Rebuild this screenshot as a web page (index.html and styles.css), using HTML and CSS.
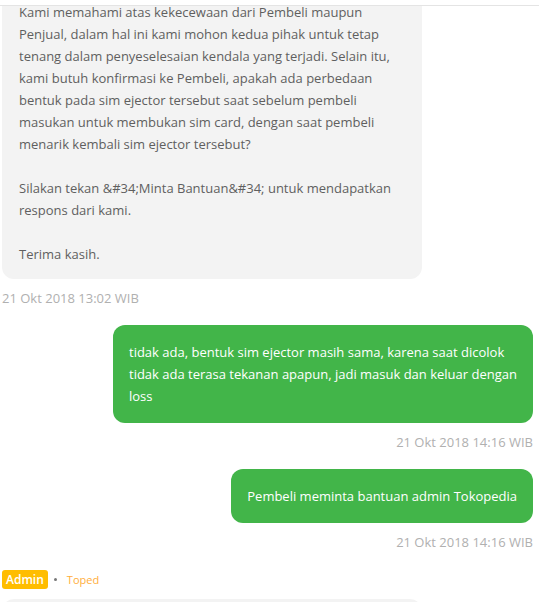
FILE: index.html
```html
<!DOCTYPE html>
<html lang="id">
<head>
<meta charset="UTF-8">
<meta name="viewport" content="width=device-width, initial-scale=1.0">
<title>Diskusi Komplain</title>
<link rel="stylesheet" href="styles.css">
</head>
<body>

<div class="topbar"></div>

<div class="chat-scroll">
<div class="chat-list">

    <div class="msg msg-left">
        <div class="bubble bubble-gray">
            Kami memahami atas kekecewaan dari Pembeli maupun Penjual, dalam hal ini kami mohon kedua pihak untuk tetap tenang dalam penyeselesaian kendala yang terjadi. Selain itu, kami butuh konfirmasi ke Pembeli, apakah ada perbedaan bentuk pada sim ejector tersebut saat sebelum pembeli masukan untuk membukan sim card, dengan saat pembeli menarik kembali sim ejector tersebut?<br><br>Silakan tekan &amp;#34;Minta Bantuan&amp;#34; untuk mendapatkan respons dari kami.<br><br>Terima kasih.
        </div>
        <div class="time">21 Okt 2018 13:02 WIB</div>
    </div>

    <div class="msg msg-right">
        <div class="bubble bubble-green">
            tidak ada, bentuk sim ejector masih sama, karena saat dicolok tidak ada terasa tekanan apapun, jadi masuk dan keluar dengan loss
        </div>
        <div class="time">21 Okt 2018 14:16 WIB</div>
    </div>

    <div class="msg msg-right">
        <div class="bubble bubble-green">
            Pembeli meminta bantuan admin Tokopedia
        </div>
        <div class="time">21 Okt 2018 14:16 WIB</div>
    </div>

    <div class="msg msg-left">
        <div class="sender">
            <span class="badge">Admin</span>
            <span class="dot"></span>
            <span class="sender-name">Toped</span>
        </div>
        <div class="bubble bubble-gray bubble-next"></div>
    </div>

</div>
</div>

</body>
</html>
```

FILE: styles.css
```css
body {
    margin: 0;
    font-family: 'Open Sans', sans-serif;
    background: #fff;
    color: #606060;
}

.topbar {
    height: 5px;
    border-bottom: 1px solid #e4e4e4;
    margin-right: 1px;
}

.chat-scroll {
    height: 596px;
    overflow: hidden;
}

.chat-list {
    margin-top: -21px;
    padding: 0 7px 0 2px;
}

.msg {
    display: flex;
    flex-direction: column;
    margin-bottom: 17px;
}

.msg-left {
    align-items: flex-start;
}

.msg-right {
    align-items: flex-end;
}

.bubble {
    max-width: 420px;
    box-sizing: border-box;
    padding: 16px;
    font-size: 13px;
    line-height: 22px;
    border-radius: 12px;
}

.bubble-gray {
    width: 420px;
    background: #f3f3f3;
    color: #5f5f5f;
    padding: 16px 16px 14px 17px;
}

.bubble-next {
    height: 60px;
}

.bubble-green {
    background: #42b549;
    color: #fff;
}

.time {
    margin-top: 9px;
    font-size: 13px;
    line-height: 20px;
    color: #b0b0b0;
}

.sender {
    display: flex;
    align-items: center;
    height: 19px;
    margin: 1px 0 10px;
}

.badge {
    background: #ffbd00;
    color: #fff;
    font-size: 12px;
    font-weight: 600;
    line-height: 19px;
    padding: 0 4px;
    border-radius: 3px;
}

.dot {
    width: 3px;
    height: 3px;
    border-radius: 50%;
    background: #777;
    margin: 0 10px 0 6px;
}

.sender-name {
    font-size: 11px;
    color: #ffae3b;
}
```
